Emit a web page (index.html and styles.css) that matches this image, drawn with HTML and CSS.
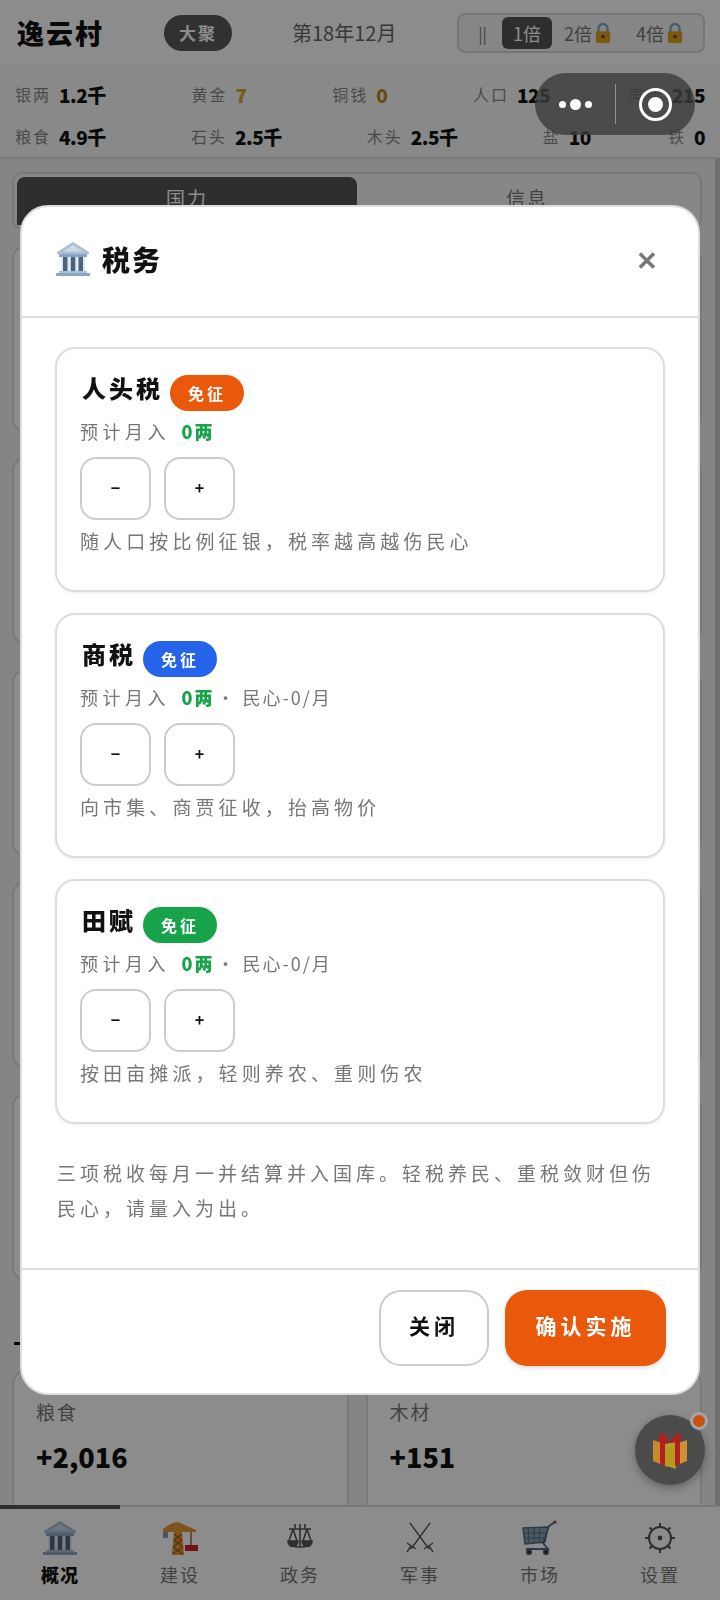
FILE: index.html
```html
<!DOCTYPE html>
<html>
  <head>
    <meta name="viewport" content="width=device-width, initial-scale=1.0"/>
    <link rel="stylesheet" href="styles.css">
  </head>
  <body>
    <svg class="defs" width="0" height="0">
      <symbol id="bank" viewBox="0 0 36 36">
        <path d="M18 1 L34 11 L34 13 L2 13 L2 11 Z" fill="#a9bfd4"/>
        <path d="M18 4 L28 10.5 L8 10.5 Z" fill="#ccdae6"/>
        <rect x="4" y="13" width="28" height="3" fill="#8aa5bf"/>
        <rect x="6" y="16" width="24" height="14" fill="#dfe9f2"/>
        <rect x="8" y="16" width="4.5" height="14" fill="#4d6478"/>
        <rect x="15.8" y="16" width="4.5" height="14" fill="#4d6478"/>
        <rect x="23.5" y="16" width="4.5" height="14" fill="#4d6478"/>
        <rect x="4" y="30" width="28" height="2" fill="#a9bfd4"/>
        <rect x="1" y="32" width="34" height="3" fill="#8aa5bf"/>
      </symbol>
      <symbol id="lock" viewBox="0 0 20 24">
        <path d="M5 11 V7 a5 5 0 0 1 10 0 V11" fill="none" stroke="#7fa6c9" stroke-width="2.6"/>
        <rect x="2" y="10" width="16" height="13" rx="2" fill="#e0a21c"/>
        <circle cx="10" cy="16" r="2" fill="#6b4a10"/>
      </symbol>
    </svg>

    <div class="app">
      <div class="topbar">
        <div class="village">逸云村</div>
        <div class="stage">大聚</div>
        <div class="date">第18年12月</div>
        <div class="speed">
          <span class="speed-item pause">||</span>
          <span class="speed-item on">1倍</span>
          <span class="speed-item">2倍<svg class="lock"><use href="#lock"/></svg></span>
          <span class="speed-item">4倍<svg class="lock"><use href="#lock"/></svg></span>
        </div>
      </div>

      <div class="resources">
        <div class="res-row">
          <span class="res"><i>银两</i><b>1.2千</b></span>
          <span class="res"><i>黄金</i><b class="gold">7</b></span>
          <span class="res"><i>铜钱</i><b class="copper">0</b></span>
          <span class="res"><i>人口</i><b>125</b></span>
          <span class="res"><i>声望</i><b>215</b></span>
        </div>
        <div class="res-row">
          <span class="res"><i>粮食</i><b>4.9千</b></span>
          <span class="res"><i>石头</i><b>2.5千</b></span>
          <span class="res"><i>木头</i><b>2.5千</b></span>
          <span class="res"><i>盐</i><b>10</b></span>
          <span class="res"><i>铁</i><b>0</b></span>
        </div>
      </div>

      <div class="main">
        <div class="tabs">
          <div class="tab on">国力</div>
          <div class="tab">信息</div>
        </div>
        <div class="stat-grid">
          <div class="stat"></div><div class="stat"></div>
          <div class="stat"></div><div class="stat"></div>
          <div class="stat"></div><div class="stat"></div>
          <div class="stat"></div><div class="stat"></div>
          <div class="stat"></div><div class="stat"></div>
        </div>
        <div class="section-head"><span class="section-mark"></span></div>
        <div class="stat-grid last">
          <div class="stat"><div class="stat-label">粮食</div><div class="stat-value">+2,016</div></div>
          <div class="stat"><div class="stat-label">木材</div><div class="stat-value">+151</div></div>
        </div>
        <div class="scroll-strip"></div>
      </div>

      <div class="nav">
        <div class="nav-progress"></div>
        <div class="nav-item on">
          <svg class="nav-icon"><use href="#bank"/></svg>
          <span>概况</span>
        </div>
        <div class="nav-item">
          <svg class="nav-icon" viewBox="0 0 36 36">
            <path d="M1 9 Q10 2 16 2 L34 10 L34 12 L1 12 Z" fill="#e8963a"/>
            <path d="M12 12 H20 L22 35 H10 Z" fill="#e8963a"/>
            <path d="M12 14 L20 20 M20 14 L12 20 M12 20 L21 27 M20 20 L11 27 M11 27 L21 34 M21 27 L10 34" stroke="#9c5c18" stroke-width="1.2"/>
            <rect x="1" y="12" width="5" height="6" fill="#8a9aa8"/>
            <path d="M29 12 V25" stroke="#8a5a30" stroke-width="1.4"/>
            <rect x="23" y="25" width="13" height="6" fill="#d0202c"/>
          </svg>
          <span>建设</span>
        </div>
        <div class="nav-item">
          <svg class="nav-icon" viewBox="0 0 36 36" fill="none" stroke="#555" stroke-width="1.6">
            <path d="M18 4 V27 M7 9 H29 M13 27 H23 M13 4 V9 M23 4 V9"/>
            <path d="M11 9 L7 21 M11 9 L15 21 M25 9 L21 21 M25 9 L29 21"/>
            <path d="M6 21 H16 a5 5.5 0 0 1 -10 0 Z M20 21 H30 a5 5.5 0 0 1 -10 0 Z" fill="#555"/>
          </svg>
          <span>政务</span>
        </div>
        <div class="nav-item">
          <svg class="nav-icon" viewBox="0 0 36 36" fill="none" stroke="#555" stroke-width="1.4">
            <path d="M8 3 L27 29 M28 3 L9 29"/>
            <path d="M22 29 L31 23 M14 29 L5 23 M27 26 L31 32 M9 26 L5 32"/>
          </svg>
          <span>军事</span>
        </div>
        <div class="nav-item">
          <svg class="nav-icon" viewBox="0 0 36 36" fill="none" stroke="#4f6a80" stroke-width="1.4">
            <path d="M1 8 L26 7 L23 22 L3 24 Z" fill="#8ea4b5"/>
            <path d="M6 8 L7 23 M12 8 L12 23 M18 8 L17 22 M1 13 H25 M2 18 H24" stroke="#4f6a80" stroke-width="1"/>
            <path d="M33 2 L27 6 L21 23 L26 29 H4" stroke-width="1.8"/>
            <circle cx="7" cy="32" r="2.4" fill="#333"/>
            <circle cx="24" cy="32" r="2.4" fill="#333"/>
            <circle cx="33" cy="2" r="1.6" fill="#c8343c" stroke="none"/>
          </svg>
          <span>市场</span>
        </div>
        <div class="nav-item">
          <svg class="nav-icon" viewBox="0 0 36 36" fill="none" stroke="#555" stroke-width="2">
            <circle cx="18" cy="18" r="11"/>
            <circle cx="18" cy="18" r="2.4" fill="#555" stroke="none"/>
            <path d="M18 3 V7 M18 29 V33 M3 18 H7 M29 18 H33 M7.5 7.5 L10 10 M26 26 L28.5 28.5 M28.5 7.5 L26 10 M10 26 L7.5 28.5"/>
          </svg>
          <span>设置</span>
        </div>
      </div>
    </div>

    <div class="overlay"></div>

    <div class="gift">
      <svg class="gift-icon" viewBox="0 0 34 37">
        <path d="M0 8 L12 12 V34 L0 29 Z" fill="#c98a2a"/>
        <path d="M34 8 L22 12 V34 L34 29 Z" fill="#cf9230"/>
        <path d="M11 12 L23 12 V37 L17 35 L11 34 Z" fill="#b59a1e"/>
        <path d="M12 12 L22 10 L24 13 L17 16 L10 13 Z" fill="#b8a020"/>
        <path d="M7 8 H12 V34 L7 32 Z M22 8 H27 V32 L22 34 Z" fill="#b3201f"/>
        <path d="M17 11 C11 -2 3 0 7 10 Z M17 11 C23 -2 31 0 27 10 Z" fill="#b3201f"/>
      </svg>
      <span class="gift-dot"></span>
    </div>

    <div class="capsule">
      <div class="capsule-dots"><span></span><span class="big"></span><span></span></div>
      <div class="capsule-line"></div>
      <div class="capsule-target"><span></span></div>
    </div>

    <div class="modal">
      <div class="modal-head">
        <svg class="modal-icon"><use href="#bank"/></svg>
        <div class="modal-title">税务</div>
        <div class="modal-close">✕</div>
      </div>
      <div class="modal-body">
        <div class="tax-card">
          <div class="tax-title"><span class="tax-name">人头税</span><span class="badge orange">免征</span></div>
          <div class="tax-income">预计月入 <b>0两</b></div>
          <div class="tax-btns"><button>−</button><button>+</button></div>
          <div class="tax-desc">随人口按比例征银，税率越高越伤民心</div>
        </div>
        <div class="tax-card">
          <div class="tax-title"><span class="tax-name">商税</span><span class="badge blue">免征</span></div>
          <div class="tax-income">预计月入 <b>0两</b><span class="tax-extra">· 民心-0/月</span></div>
          <div class="tax-btns"><button>−</button><button>+</button></div>
          <div class="tax-desc">向市集、商贾征收，抬高物价</div>
        </div>
        <div class="tax-card">
          <div class="tax-title"><span class="tax-name">田赋</span><span class="badge green">免征</span></div>
          <div class="tax-income">预计月入 <b>0两</b><span class="tax-extra">· 民心-0/月</span></div>
          <div class="tax-btns"><button>−</button><button>+</button></div>
          <div class="tax-desc">按田亩摊派，轻则养农、重则伤农</div>
        </div>
        <p class="note">三项税收每月一并结算并入国库。轻税养民、重税敛财但伤民心，请量入为出。</p>
      </div>
      <div class="modal-foot">
        <button class="btn-close">关闭</button>
        <button class="btn-ok">确认实施</button>
      </div>
    </div>
  </body>
</html>
```

FILE: styles.css
```css
* {
  box-sizing: border-box;
}
html, body {
  margin: 0;
  height: 100%;
  overflow: hidden;
}
body {
  font-family: "Noto Sans CJK SC", "Noto Sans", sans-serif;
  color: #222;
  background: #fff;
}
.defs {
  position: absolute;
}

.app {
  height: 1600px;
  display: flex;
  flex-direction: column;
}

/* top bar */
.topbar {
  height: 66px;
  display: flex;
  align-items: center;
  padding: 0 15px 0 17px;
  border-bottom: 1px solid #eee;
}
.village {
  font-size: 27px;
  font-weight: 900;
  letter-spacing: 2px;
  width: 147px;
  color: #111;
}
.stage {
  width: 68px;
  height: 36px;
  border-radius: 18px;
  background: #5a5a5a;
  color: #fff;
  font-size: 17px;
  font-weight: 700;
  letter-spacing: 2px;
  display: flex;
  align-items: center;
  justify-content: center;
}
.date {
  margin-left: 60px;
  font-size: 20px;
  color: #666;
  width: 165px;
  white-space: nowrap;
}
.speed {
  width: 248px;
  height: 40px;
  margin-left: auto;
  border: 2px solid #d8d8d8;
  border-radius: 8px;
  background: #f4f4f4;
  display: flex;
  align-items: center;
  padding: 2px 4px;
  font-size: 18px;
  color: #777;
}
.speed-item {
  height: 32px;
  display: flex;
  align-items: center;
  justify-content: center;
  flex: 0 0 auto;
  width: 72px;
}
.speed-item.pause {
  width: 39px;
  font-size: 16px;
}
.speed-item.on {
  width: 50px;
  background: #555;
  color: #fff;
  border-radius: 6px;
}
.lock {
  width: 18px;
  height: 22px;
  margin-left: 2px;
}

/* resources */
.resources {
  height: 93px;
  padding: 7px 15px 0;
  border-bottom: 2px solid #dedede;
  background: #fafafa;
}
.res-row {
  height: 42px;
  display: flex;
  justify-content: space-between;
  align-items: center;
}
.res {
  display: flex;
  align-items: center;
  gap: 8px;
  white-space: nowrap;
}
.res:last-child {
  margin-left: -8px;
}
.res i {
  font-style: normal;
  font-size: 16px;
  letter-spacing: 2px;
  color: #888;
}
.res b {
  font-size: 19px;
  font-weight: 900;
  letter-spacing: -0.5px;
  color: #111;
}
.res b.gold {
  color: #d9a520;
}
.res b.copper {
  color: #b8892c;
}

/* page behind the dialog */
.main {
  position: relative;
  flex: 1;
  overflow: hidden;
  padding: 13px 18px 0 12px;
  background: #f3f3f3;
}
.scroll-strip {
  position: absolute;
  right: 0;
  top: 0;
  bottom: 0;
  width: 5px;
  background: #cacaca;
}
.tabs {
  height: 58px;
  border: 2px solid #dcdcdc;
  border-radius: 10px;
  padding: 3px;
  display: flex;
  background: #f6f6f6;
}
.tab {
  flex: 1;
  display: flex;
  justify-content: center;
  padding-top: 7px;
  font-size: 19px;
  color: #777;
  letter-spacing: 2px;
}
.tab.on {
  background: #555;
  color: #fff;
  border-radius: 8px 8px 0 0;
}
.stat-grid {
  display: grid;
  grid-template-columns: 1fr 1fr;
  gap: 24px 17px;
  margin-top: 15px;
}
.stat {
  height: 188px;
  border: 2px solid #dcdcdc;
  border-radius: 14px;
  background: #fff;
  padding: 26px 22px;
}
.stat-grid.last {
  margin-top: 0;
}
.stat-label {
  font-size: 19px;
  line-height: 28px;
  color: #777;
  letter-spacing: 2px;
}
.stat-value {
  margin-top: 11px;
  font-size: 27px;
  line-height: 40px;
  font-weight: 900;
  color: #111;
}
.section-head {
  height: 89px;
  padding: 61px 0 0 2px;
}
.section-mark {
  display: block;
  width: 8px;
  height: 3px;
  background: #111;
}

/* bottom nav */
.nav {
  position: relative;
  height: 95px;
  display: grid;
  grid-template-columns: repeat(6, 1fr);
  background: #fff;
  border-top: 2px solid #dcdcdc;
}
.nav-progress {
  position: absolute;
  left: 0;
  top: -2px;
  width: 120px;
  height: 4px;
  background: #555;
}
.nav-item {
  display: flex;
  flex-direction: column;
  align-items: center;
  padding-top: 13px;
  font-size: 18px;
  letter-spacing: 2px;
  color: #777;
}
.nav-item.on {
  color: #111;
  font-weight: 900;
  letter-spacing: 1px;
}
.nav-icon {
  width: 36px;
  height: 36px;
  margin-bottom: 5px;
  flex: none;
}

.overlay {
  position: fixed;
  top: 0;
  bottom: 0;
  left: 0;
  right: 0;
  background: rgba(0, 0, 0, 0.45);
}

/* floating gift */
.gift {
  position: absolute;
  left: 635px;
  top: 1415px;
  width: 70px;
  height: 70px;
  border-radius: 50%;
  background: #4b4b4b;
  box-shadow: 0 3px 8px rgba(0, 0, 0, 0.3);
  display: flex;
  align-items: center;
  justify-content: center;
}
.gift-icon {
  width: 34px;
  height: 37px;
}
.gift-dot {
  position: absolute;
  right: -3px;
  top: -3px;
  width: 18px;
  height: 18px;
  border-radius: 50%;
  background: #c9500f;
  border: 3px solid #a5a5a5;
}

/* wechat capsule */
.capsule {
  position: absolute;
  left: 535px;
  top: 73px;
  width: 160px;
  height: 62px;
  border-radius: 31px;
  background: rgba(60, 60, 60, 0.8);
  display: flex;
  align-items: center;
}
.capsule-dots {
  width: 80px;
  display: flex;
  align-items: center;
  justify-content: center;
  gap: 4px;
}
.capsule-dots span {
  width: 7px;
  height: 7px;
  border-radius: 50%;
  background: #fff;
}
.capsule-dots .big {
  width: 11px;
  height: 11px;
}
.capsule-line {
  width: 1px;
  height: 40px;
  background: rgba(255, 255, 255, 0.4);
}
.capsule-target {
  flex: 1;
  display: flex;
  justify-content: center;
}
.capsule-target span {
  width: 33px;
  height: 33px;
  border-radius: 50%;
  border: 3px solid #fff;
  display: flex;
  align-items: center;
  justify-content: center;
}
.capsule-target span::after {
  content: "";
  width: 15px;
  height: 15px;
  border-radius: 50%;
  background: #fff;
}

/* dialog */
.modal {
  position: absolute;
  left: 20px;
  top: 205px;
  width: 680px;
  height: 1190px;
  background: #fff;
  border: 2px solid #ddd;
  border-radius: 28px;
  display: flex;
  flex-direction: column;
}
.modal-head {
  height: 111px;
  flex: none;
  display: flex;
  align-items: center;
  padding: 0 40px 6px 33px;
  border-bottom: 2px solid #ddd;
}
.modal-icon {
  width: 36px;
  height: 36px;
}
.modal-title {
  margin-left: 11px;
  font-size: 28px;
  font-weight: 900;
  letter-spacing: 2px;
  color: #111;
}
.modal-close {
  margin-left: auto;
  font-size: 26px;
  font-weight: 700;
  color: #777;
}
.modal-body {
  flex: 1;
  padding: 29px 33px 0;
  display: flex;
  flex-direction: column;
  gap: 21px;
}
.tax-card {
  height: 245px;
  flex: none;
  border: 2px solid #ddd;
  border-radius: 20px;
  padding: 25px 23px 0;
  box-shadow: 0 1px 3px rgba(0, 0, 0, 0.08);
}
.tax-title {
  display: flex;
  align-items: center;
  height: 37px;
  color: #111;
}
.tax-name {
  margin: 0 0 10px 2px;
  font-size: 24px;
  line-height: 28px;
  font-weight: 900;
  letter-spacing: 3px;
}
.badge {
  margin-left: 7px;
  width: 74px;
  height: 36px;
  border-radius: 18px;
  color: #fff;
  font-size: 16px;
  font-weight: 700;
  letter-spacing: 3px;
  display: flex;
  align-items: center;
  justify-content: center;
}
.orange {
  background: #ea580c;
}
.blue {
  background: #2563eb;
}
.green {
  background: #16a34a;
}
.tax-income {
  margin-top: 7px;
  height: 27px;
  line-height: 27px;
  font-size: 18px;
  letter-spacing: 4.5px;
  color: #777;
}
.tax-income b {
  margin-left: 3px;
  color: #16a34a;
  font-weight: 900;
  letter-spacing: 2px;
}
.tax-extra {
  margin-left: 2px;
  letter-spacing: 2px;
}
.tax-btns {
  margin-top: 12px;
  display: flex;
  gap: 13px;
}
.tax-btns button {
  width: 71px;
  height: 63px;
  background: #fff;
  border: 2px solid #ccc;
  border-radius: 16px;
  font-family: inherit;
  font-size: 16px;
  font-weight: 700;
  color: #111;
  padding: 0 0 4px;
}
.tax-desc {
  margin-top: 7px;
  font-size: 19px;
  line-height: 27px;
  letter-spacing: 4.1px;
  color: #777;
  white-space: nowrap;
}
.note {
  margin: 10px 0 0 2px;
  font-size: 19px;
  line-height: 35px;
  letter-spacing: 4px;
  color: #777;
}
.modal-foot {
  height: 125px;
  flex: none;
  display: flex;
  justify-content: flex-end;
  align-items: flex-start;
  gap: 16px;
  padding: 20px 32px 0;
  border-top: 2px solid #ddd;
}
.modal-foot button {
  height: 76px;
  border-radius: 22px;
  font-family: inherit;
  font-size: 21px;
  font-weight: 700;
  letter-spacing: 4px;
  padding: 0 0 6px;
}
.btn-close {
  width: 110px;
  background: #fff;
  border: 2px solid #ccc;
  color: #111;
}
.btn-ok {
  width: 161px;
  background: #ea580c;
  border: none;
  color: #fff;
  box-shadow: 0 2px 4px rgba(0, 0, 0, 0.15);
}
```
